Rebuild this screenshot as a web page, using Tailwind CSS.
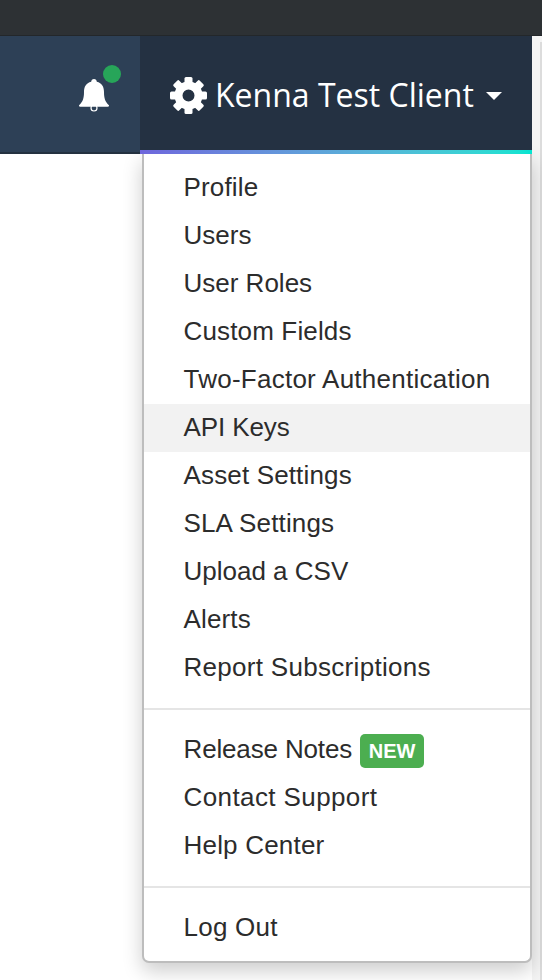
<!doctype html>
<html><head><meta charset="utf-8"><script src="https://cdn.jsdelivr.net/npm/@tailwindcss/browser@4"></script></head>
<body class="bg-white">
<div class="relative w-[542px] h-[980px] overflow-hidden bg-white font-['Liberation_Sans',sans-serif]">
  <div class="h-9 bg-[#2d3134] border-b border-[#23272a]"></div>
  <div class="relative z-10 flex h-[118px] w-[532px]">
    <div class="relative w-[140px] bg-[#2d4056] border-b-2 border-[#243140]">
      <svg class="absolute left-[79px] top-[43px]" width="30" height="33" viewBox="0 0 30 33"><path fill="#fff" d="M15 0c1.600 0 2.800 1.200 2.800 2.800C23 4 25 8 25 13c0 6 1 9.500 4.700 13 .7.800.2 1.800-1 1.800H1.300c-1.200 0-1.700-1-1-1.800C4 22.500 5 19 5 13 5 8 7 4 12.200 2.800 12.200 1.200 13.400 0 15 0z"/><circle cx="15" cy="29" r="3" fill="none" stroke="#fff" stroke-width="1.200"/></svg>
      <span class="absolute left-[103px] top-[29px] w-[18px] h-[18px] rounded-full bg-[#27a559]"></span>
    </div>
    <div class="relative w-[392px] flex items-center pl-[30px] bg-[#243142] text-white">
      <svg class="shrink-0" width="37" height="37" viewBox="0 0 37 37" fill="#fff"><circle cx="18.500" cy="18.500" r="10" fill="none" stroke="#fff" stroke-width="8"/><g><rect x="14.500" y="0" width="8" height="10" rx="1.500"/><rect x="14.500" y="27" width="8" height="10" rx="1.500"/><rect x="14.500" y="0" width="8" height="10" rx="1.500" transform="rotate(45 18.500 18.500)"/><rect x="14.500" y="27" width="8" height="10" rx="1.500" transform="rotate(45 18.500 18.500)"/><rect x="14.500" y="0" width="8" height="10" rx="1.500" transform="rotate(90 18.500 18.500)"/><rect x="14.500" y="27" width="8" height="10" rx="1.500" transform="rotate(90 18.500 18.500)"/><rect x="14.500" y="0" width="8" height="10" rx="1.500" transform="rotate(135 18.500 18.500)"/><rect x="14.500" y="27" width="8" height="10" rx="1.500" transform="rotate(135 18.500 18.500)"/></g></svg>
      <span class="ml-[8px] font-['Open_Sans',sans-serif] text-[32px] leading-none whitespace-nowrap">Kenna Test Client</span>
      <span class="ml-[12px] mt-[2px] w-0 h-0 border-x-[8px] border-x-transparent border-t-[8px] border-t-white"></span>
      <div class="absolute left-0 right-0 bottom-0 h-[4px] bg-gradient-to-r from-[#6e66dc] to-[#00e5d0]"></div>
    </div>
  </div>
  <div class="absolute right-0 top-[36px] bottom-0 w-[10px] bg-[#f4f4f4]"><div class="absolute right-0 top-[6px] bottom-0 w-[2px] bg-[#dcdcdc]"></div></div>
  <div class="absolute left-[142px] top-[154px] w-[390px] h-[809px] pt-[10px] bg-white border-x-2 border-b-2 border-[#bdbdbd] rounded-b-[7px] shadow-[0_8px_20px_rgba(0,0,0,0.2)] text-[#2c2c2c] text-[26px]">
    <ul>
      <li class="h-12 leading-[46px] pl-[39.5px] tracking-[0.15px]">Profile</li>
      <li class="h-12 leading-[46px] pl-[39.5px]">Users</li>
      <li class="h-12 leading-[46px] pl-[39.5px]">User Roles</li>
      <li class="h-12 leading-[46px] pl-[39.5px] tracking-[0.15px]">Custom Fields</li>
      <li class="h-12 leading-[46px] pl-[39.5px] tracking-[0.25px]">Two-Factor Authentication</li>
      <li class="h-12 leading-[46px] pl-[39.5px] bg-[#f2f2f2] tracking-[-0.1px]">API Keys</li>
      <li class="h-12 leading-[46px] pl-[39.5px] tracking-[0.15px]">Asset Settings</li>
      <li class="h-12 leading-[46px] pl-[39.5px] tracking-[0.15px]">SLA Settings</li>
      <li class="h-12 leading-[46px] pl-[39.5px]">Upload a CSV</li>
      <li class="h-12 leading-[46px] pl-[39.5px] tracking-[0.15px]">Alerts</li>
      <li class="h-12 leading-[46px] pl-[39.5px] tracking-[0.3px]">Report Subscriptions</li>
    </ul>
    <div class="h-[2px] bg-[#e5e5e5] mt-[16px] mb-[16px]"></div>
    <ul>
      <li class="h-12 leading-[46px] pl-[39.5px] flex items-start"><span class="tracking-[-0.15px]">Release Notes</span><span class="ml-[8px] mt-[8px] w-[64px] h-[34px] rounded-[5px] bg-[#4cae50] text-white text-[20px] font-bold leading-[34px] text-center">NEW</span></li>
      <li class="h-12 leading-[46px] pl-[39.5px] tracking-[0.4px]">Contact Support</li>
      <li class="h-12 leading-[46px] pl-[39.5px] tracking-[0.2px]">Help Center</li>
    </ul>
    <div class="h-[2px] bg-[#e5e5e5] mt-[16px] mb-[16px]"></div>
    <ul>
      <li class="h-12 leading-[46px] pl-[39.5px] tracking-[0.25px]">Log Out</li>
    </ul>
  </div>
</div>
</body></html>
